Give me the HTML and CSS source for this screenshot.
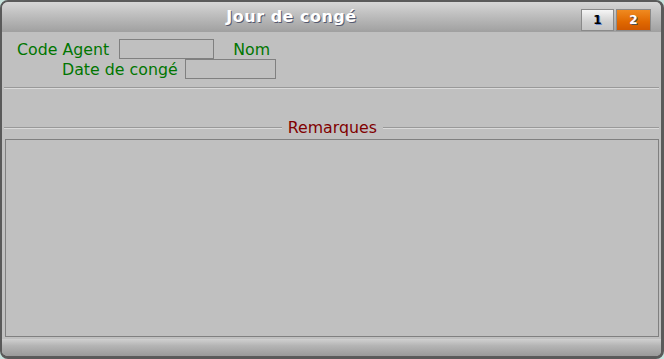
FILE: index.html
```html
<!DOCTYPE html>
<html lang="fr">
<head>
<meta charset="utf-8">
<title>Jour de congé</title>
<link rel="stylesheet" href="styles.css">
</head>
<body>
<div class="window">
  <div class="titlebar">
    <div class="title">Jour de congé</div>
    <div class="tabs">
      <div class="tab">1</div>
      <div class="tab active">2</div>
    </div>
  </div>
  <div class="content">
    <div class="row row1">
      <span class="label">Code Agent</span>
      <span class="field f1"></span>
      <span class="label nom">Nom</span>
    </div>
    <div class="row row2">
      <span class="label">Date de congé</span>
      <span class="field f2"></span>
    </div>
    <div class="sep"></div>
    <div class="legend">
      <span class="line"></span>
      <span class="legend-text">Remarques</span>
      <span class="line short"></span>
    </div>
    <div class="memo"></div>
  </div>
  <div class="statusbar"></div>
</div>
</body>
</html>
```
FILE: styles.css
```css
html, body {
  margin: 0;
  padding: 0;
  background: #c6e2dc;
}
body {
  width: 664px;
  height: 359px;
  overflow: hidden;
  font-family: "DejaVu Sans", Verdana, sans-serif;
}
.window {
  box-sizing: border-box;
  width: 664px;
  height: 359px;
  border: 2px solid #5a5a5a;
  border-right-width: 3px;
  border-bottom-width: 3px;
  border-radius: 8px;
  overflow: hidden;
  display: flex;
  flex-direction: column;
  background: #c0c0c0;
}
.titlebar {
  height: 30px;
  flex: none;
  background: linear-gradient(#d6d6d6, #bdbdbd 45%, #a0a0a0);
  display: flex;
  align-items: flex-end;
}
.title {
  flex: 1;
  align-self: center;
  text-align: center;
  margin-top: -1px;
  color: #ffffff;
  font-weight: bold;
  font-size: 16px;
  letter-spacing: 0.5px;
  text-shadow: 1px 1px 0 #555a70;
}
.tabs {
  margin-right: 10px;
  margin-bottom: 1px;
  display: flex;
  gap: 2px;
}
.tab {
  box-sizing: border-box;
  width: 33px;
  height: 22px;
  border: 1px solid #8a8a8a;
  background: linear-gradient(#f6f6f6, #d0d0d0 60%, #c4c4c4);
  font-weight: bold;
  font-size: 12px;
  text-align: center;
  line-height: 20px;
  color: #000;
  text-shadow: 1px 1px 0 #6a8ad0;
}
.tab.active {
  width: 35px;
  background: linear-gradient(#f08a20, #e06800 60%, #d05800);
  color: #fff;
  text-shadow: 1px 1px 0 #505050;
}
.content {
  flex: 1;
  display: flex;
  flex-direction: column;
  background: #c0c0c0;
}
.row {
  display: flex;
  align-items: center;
  height: 20px;
}
.row1 {
  margin-top: 7px;
  padding-left: 15px;
}
.row2 {
  padding-left: 60px;
}
.label {
  color: #007600;
  font-size: 15.8px;
}
.field {
  box-sizing: border-box;
  height: 20px;
  border: 1px solid #808080;
  background: #c0c0c0;
}
.f1 {
  width: 95px;
  margin-left: 10px;
}
.f2 {
  width: 91px;
  margin-left: 7px;
}
.nom {
  margin-left: 19px;
}
.sep {
  margin: 8px 2px 0 2px;
  border-top: 1px solid #999999;
  border-bottom: 1px solid #dadada;
}
.legend {
  margin-top: 29px;
  display: flex;
  align-items: center;
  padding-left: 2px;
  padding-right: 2px;
}
.line {
  flex: 1;
  border-top: 1px solid #999999;
  border-bottom: 1px solid #dadada;
}
.line.short {
  flex: none;
  width: 276px;
}
.legend-text {
  color: #800000;
  font-size: 15.8px;
  padding: 0 6px;
}
.memo {
  flex: 1;
  margin: 2px 2px 2px 3px;
  border: 1px solid #808080;
}
.statusbar {
  height: 17px;
  flex: none;
  background: linear-gradient(#d0d0d0, #b4b4b4 40%, #9a9a9a);
}
```
